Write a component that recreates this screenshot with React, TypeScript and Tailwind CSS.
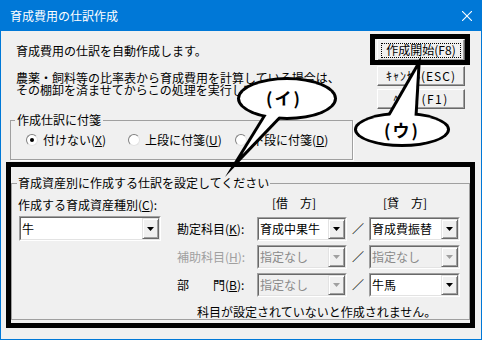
import React from "react";

const FONT = "font-['Noto_Sans_CJK_JP','Noto_Sans_CJK_SC',sans-serif]";

function Arrow({ disabled }: { disabled?: boolean }) {
  return (
    <svg width="7" height="4" viewBox="0 0 7 4">
      <polygon points="0,0 7,0 3.5,4" fill={disabled ? "#a0a0a0" : "#000"} />
    </svg>
  );
}

function Combo({
  value,
  className = "",
  disabled,
}: {
  value: string;
  className?: string;
  disabled?: boolean;
}) {
  return (
    <div
      className={`flex border border-t-[#a0a0a0] border-l-[#a0a0a0] border-b-white border-r-white ${className}`}
    >
      <div
        className={`flex flex-1 min-w-0 border border-t-[#696969] border-l-[#696969] border-b-[#e3e3e3] border-r-[#e3e3e3] ${
          disabled ? "bg-[#f0f0f0] text-[#8a8a8a]" : "bg-white text-black"
        }`}
      >
        <div className="flex flex-1 items-center overflow-hidden whitespace-nowrap pl-[1px]">{value}</div>
        <div className="flex w-[17px] items-center justify-center border border-t-[#e3e3e3] border-l-[#e3e3e3] border-b-[#696969] border-r-[#696969] bg-[#f0f0f0] shadow-[inset_1px_1px_0_#fff,inset_-1px_-1px_0_#a0a0a0]">
          <Arrow disabled={disabled} />
        </div>
      </div>
    </div>
  );
}

function Btn({ children, className = "" }: { children: React.ReactNode; className?: string }) {
  return (
    <button
      type="button"
      className={`flex w-[88px] items-center justify-center border border-t-white border-l-white border-b-[#696969] border-r-[#696969] bg-[#f0f0f0] shadow-[inset_-1px_-1px_0_#a0a0a0] leading-[12px] ${className}`}
    >
      {children}
    </button>
  );
}

function Radio({
  checked,
  children,
  className = "",
}: {
  checked?: boolean;
  children: React.ReactNode;
  className?: string;
}) {
  return (
    <div className={`flex items-center ${className}`}>
      <span className="flex h-[12px] w-[12px] items-center justify-center rounded-full border border-t-[#808080] border-l-[#808080] border-b-[#e3e3e3] border-r-[#e3e3e3] bg-white">
        {checked && <span className="h-[4px] w-[4px] rounded-full bg-black" />}
      </span>
      <span className="ml-[5px] whitespace-nowrap">{children}</span>
    </div>
  );
}

function Row({
  label,
  disabledLabel,
  left,
  right,
}: {
  label: React.ReactNode;
  disabledLabel?: boolean;
  left: React.ReactNode;
  right: React.ReactNode;
}) {
  return (
    <div className="flex h-[24px] items-center">
      <div className={`w-[80px] whitespace-pre ${disabledLabel ? "text-[#a0a0a0]" : ""}`}>{label}</div>
      {left}
      <div className="flex w-[22px] justify-center">／</div>
      {right}
    </div>
  );
}

export default function App() {
  return (
    <div className={`relative h-[340px] w-[482px] bg-[#0078d7] text-[12px] leading-[12px] text-black ${FONT}`}>
      {/* title bar */}
      <div className="flex h-[31px] items-center pl-[10px] pr-[10px] text-white">
        <span>育成費用の仕訳作成</span>
        <svg className="ml-auto" width="10" height="10" viewBox="0 0 10 10">
          <line x1="0" y1="0" x2="10" y2="10" stroke="#fff" strokeWidth="1.1" />
          <line x1="10" y1="0" x2="0" y2="10" stroke="#fff" strokeWidth="1.1" />
        </svg>
      </div>

      {/* body */}
      <div className="mx-[1px] flex h-[308px] flex-col bg-[#f0f0f0]">
        {/* top area */}
        <div className="flex h-[83px]">
          <div className="pl-[15px] pt-[14px]">
            <p>育成費用の仕訳を自動作成します。</p>
            <p className="mt-[15px] whitespace-nowrap">農薬・飼料等の比率表から育成費用を計算している場合は、</p>
            <p className="whitespace-nowrap">その棚卸を済ませてからこの処理を実行してください。</p>
          </div>
          <div className="ml-auto mr-[16px] flex flex-col pt-[8px]">
            <Btn className="h-[22px] border-black shadow-[inset_-1px_-1px_0_#696969,inset_1px_1px_0_#fff]">
              <span className="flex h-[15px] w-[80px] items-center justify-center border border-dotted border-black">
                作成開始(F8)
              </span>
            </Btn>
            <Btn className="mt-[5px] h-[20px] tracking-[1px]">ｷｬﾝｾﾙ(ESC)</Btn>
            <Btn className="mt-[3px] h-[20px] tracking-[1.4px]">ﾍﾙﾌﾟ(F1)</Btn>
          </div>
        </div>

        {/* group 1 */}
        <fieldset className="ml-[9px] w-[343px] border border-[#a0a0a0] shadow-[1px_1px_0_#fff]">
          <legend className="ml-[4px] px-[2px] leading-[12px]">作成仕訳に付箋</legend>
          <div className="mt-[8px] box-content flex h-[12px] pb-[13px] pl-[15px]">
            <Radio checked className="w-[102px]">
              付けない(<u>X</u>)
            </Radio>
            <Radio className="w-[107px]">
              上段に付箋(<u>U</u>)
            </Radio>
            <Radio>
              下段に付箋(<u>D</u>)
            </Radio>
          </div>
        </fieldset>

        {/* group 2 */}
        <fieldset className="ml-[10px] mt-[17px] w-[459px] border border-[#a0a0a0]">
          <legend className="ml-[5px] px-[1px] leading-[12px]">育成資産別に作成する仕訳を設定してください</legend>
          <div className="flex pb-[1px]">
            <div className="w-[149px] pl-[6px] pt-[10px]">
              <div className="whitespace-nowrap">
                作成する育成資産種別(<u>C</u>):
              </div>
              <Combo value="牛" className="ml-[1px] mt-[5px] h-[25px] w-[142px]" />
            </div>
            <div className="ml-[16px] flex flex-col pt-[8px]">
              <div className="flex h-[12px]">
                <span className="w-[95px]" />
                <span className="w-[111px] whitespace-pre">[借　方]</span>
                <span className="whitespace-pre">[貸　方]</span>
              </div>
              <div className="mt-[8px] flex flex-col gap-[4px]">
                <Row
                  label={
                    <>
                      勘定科目(<u>K</u>):
                    </>
                  }
                  left={<Combo value="育成中果牛" className="h-[24px] w-[90px]" />}
                  right={<Combo value="育成費振替" className="h-[24px] w-[91px]" />}
                />
                <Row
                  disabledLabel
                  label={
                    <>
                      補助科目(<u>H</u>):
                    </>
                  }
                  left={<Combo disabled value="指定なし" className="h-[24px] w-[90px]" />}
                  right={<Combo disabled value="指定なし" className="h-[24px] w-[91px]" />}
                />
                <Row
                  label={
                    <>
                      部　　門(<u>B</u>):
                    </>
                  }
                  left={<Combo disabled value="指定なし" className="h-[24px] w-[90px]" />}
                  right={<Combo value="牛馬" className="h-[24px] w-[91px]" />}
                />
              </div>
              <div className="mt-[9px] whitespace-nowrap pl-[20px]">科目が設定されていないと作成されません。</div>
            </div>
          </div>
        </fieldset>
      </div>

      {/* annotation rectangles */}
      <div className="absolute left-[370px] top-[34px] h-[31px] w-[100px] border-[5px] border-black" />
      <div className="absolute left-[6px] top-[162px] h-[166px] w-[469px] border-[5px] border-black" />

      {/* callouts */}
      <svg className="pointer-events-none absolute left-0 top-0" width="482" height="340" viewBox="0 0 482 340">
        {/* (イ) */}
        <ellipse cx="287" cy="98.5" rx="50" ry="21.5" fill="#000" />
        <polygon points="267.5,108 291,108 225,177" fill="#000" />
        <ellipse cx="287" cy="98.5" rx="47" ry="18.5" fill="#fff" />
        <polygon points="270,109.6 288.8,105.9 242.3,154.5" fill="#fff" />
        {/* (ウ) */}
        <ellipse cx="402" cy="129.5" rx="48" ry="17.5" fill="#000" />
        <polygon points="383.1,122 417.2,122 421,56" fill="#000" />
        <ellipse cx="402" cy="129.5" rx="45" ry="14.5" fill="#fff" />
        <polygon points="385.7,123.5 414.2,121.8 417.3,68.5" fill="#fff" />
      </svg>
      <span className="absolute left-[266px] top-[88px] text-[17px] font-bold leading-[20px] tracking-[2px]">(イ)</span>
      <span className="absolute left-[384px] top-[120px] text-[17px] font-bold leading-[20px] tracking-[2px]">(ウ)</span>
    </div>
  );
}
